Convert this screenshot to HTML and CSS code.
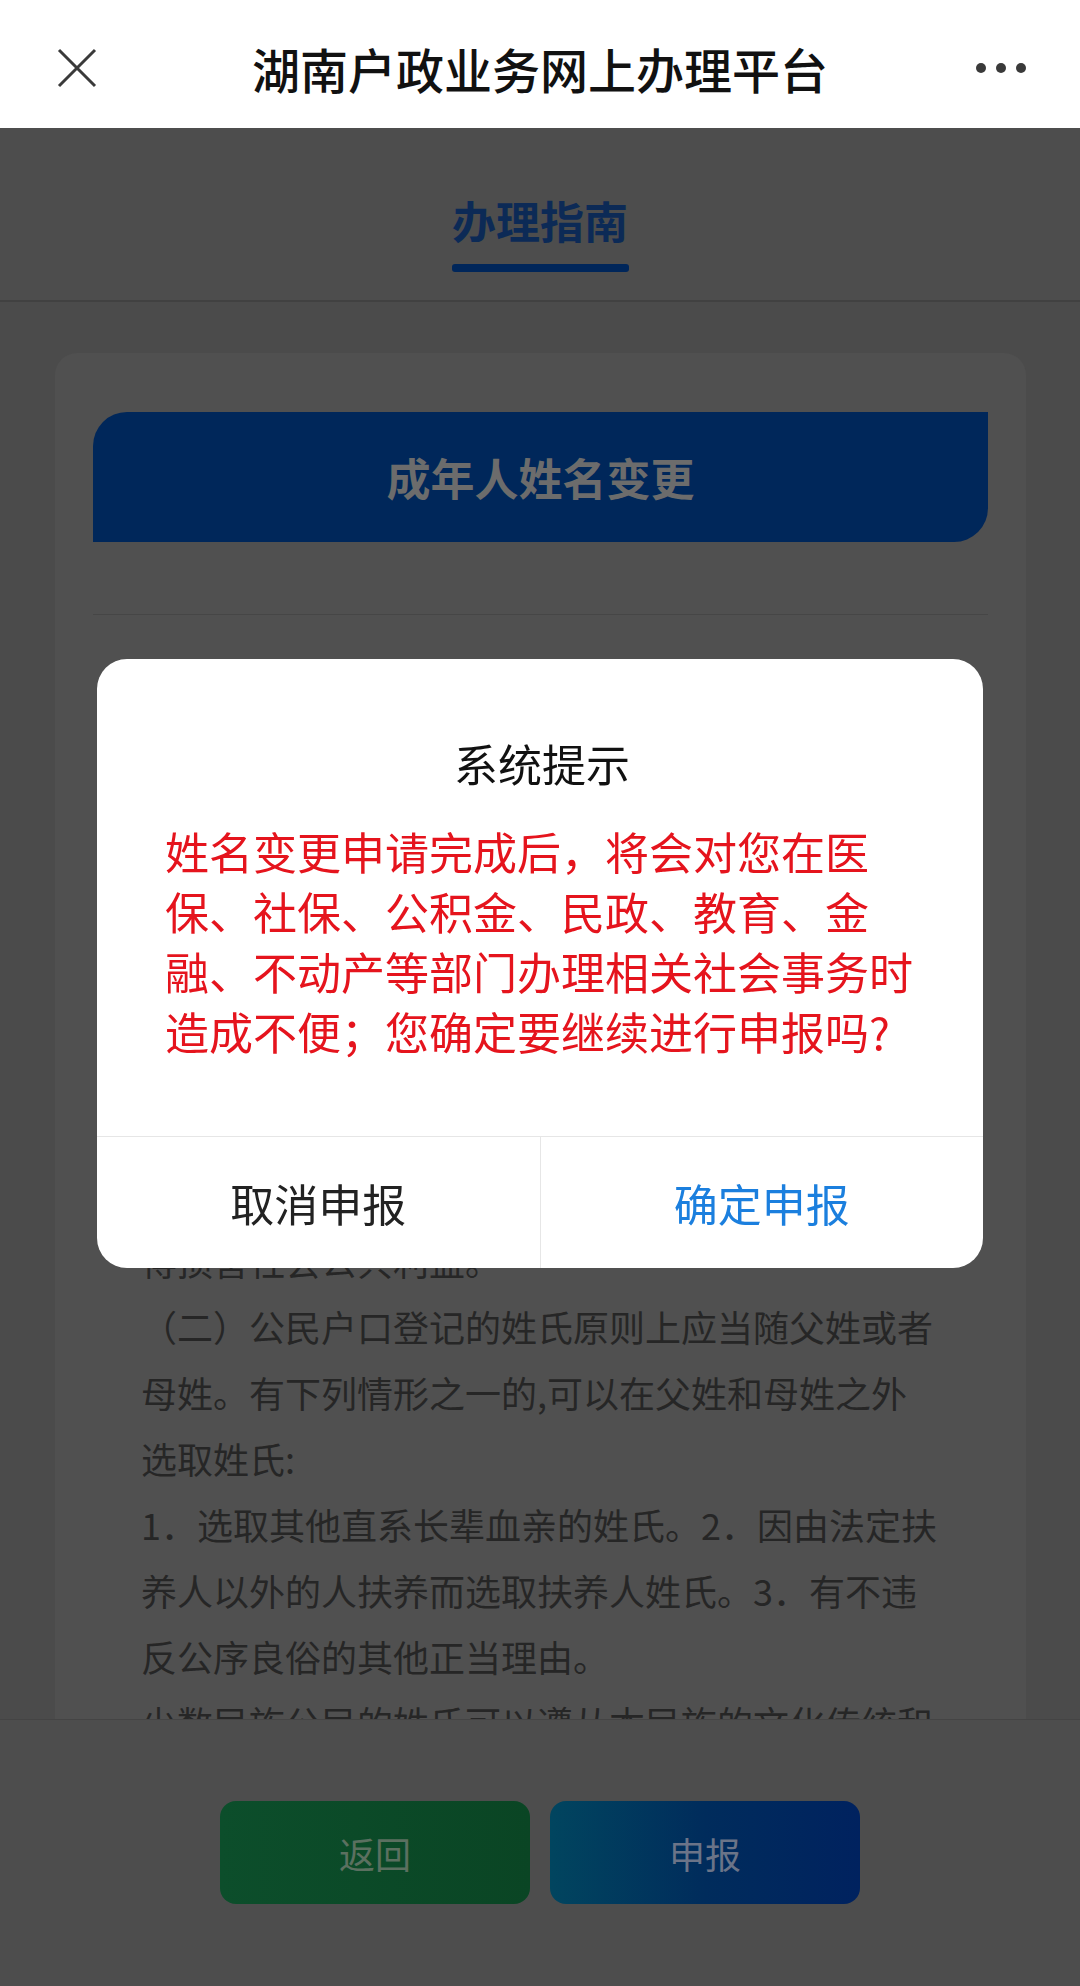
FILE: index.html
```html
<!DOCTYPE html>
<html lang="zh-CN">
<head>
  <meta charset="UTF-8">
  <meta name="viewport" content="width=device-width, initial-scale=1.0">
  <title>湖南户政业务网上办理平台</title>
  <link rel="stylesheet" href="styles.css">
</head>
<body>
  <header class="nav">
    <div class="nav-left">
      <svg class="icon-close" width="40" height="40" viewBox="0 0 40 40">
        <path d="M2 2 L38 38 M38 2 L2 38" stroke="#3a3a3a" stroke-width="3" fill="none"/>
      </svg>
    </div>
    <div class="nav-title">湖南户政业务网上办理平台</div>
    <div class="nav-right">
      <svg class="icon-more" width="50" height="12" viewBox="0 0 50 12">
        <circle cx="5" cy="6" r="5" fill="#3a3a3a"/>
        <circle cx="25" cy="6" r="5" fill="#3a3a3a"/>
        <circle cx="45" cy="6" r="5" fill="#3a3a3a"/>
      </svg>
    </div>
  </header>

  <div class="tabs">
    <div class="tab active">
      <span class="tab-text">办理指南</span>
      <span class="tab-bar"></span>
    </div>
  </div>

  <main class="main">
    <div class="card">
      <div class="banner">成年人姓名变更</div>
      <div class="divider"></div>
      <div class="guide">
        <p>一、姓名变更的相关规定</p>
        <p>《中华人民共和国民法典》第一千零一十二条、第一千零一十五条；《中华人民共和国户口登记条例》第十八条。</p>
        <p>（一）公民依法享有姓名权。公民行使姓名权属于民事活动，既应当依照民法通则第九十九条第一款和婚姻法第二十二条的规定，还应当遵守民法通则第七条的相关规定，即公民应当尊重社会公德，不得损害社会公共利益。</p>
        <p>（二）公民户口登记的姓氏原则上应当随父姓或者母姓。有下列情形之一的,可以在父姓和母姓之外选取姓氏:</p>
        <p>1．选取其他直系长辈血亲的姓氏。2．因由法定扶养人以外的人扶养而选取扶养人姓氏。3．有不违反公序良俗的其他正当理由。</p>
        <p>少数民族公民的姓氏可以遵从本民族的文化传统和风俗习惯。</p>
      </div>
    </div>
  </main>

  <footer class="footer">
    <button class="btn btn-back">返回</button>
    <button class="btn btn-submit">申报</button>
  </footer>

  <div class="mask">
    <div class="dialog">
      <div class="dialog-body">
        <div class="dialog-title">系统提示</div>
        <div class="dialog-msg">姓名变更申请完成后，将会对您在医保、社保、公积金、民政、教育、金融、不动产等部门办理相关社会事务时造成不便；您确定要继续进行申报吗?</div>
      </div>
      <div class="dialog-footer">
        <button class="dialog-btn cancel">取消申报</button>
        <button class="dialog-btn confirm">确定申报</button>
      </div>
    </div>
  </div>
</body>
</html>
```

FILE: styles.css
```css
/* page under the modal is drawn in its dimmed colours */
body {
  margin: 0;
  width: 1080px;
  height: 1986px;
  display: flex;
  flex-direction: column;
  overflow: hidden;
  font-family: "Noto Sans CJK SC", "Noto Sans", sans-serif;
  background-color: #4b4b4b;
}

.nav {
  height: 120px;
  padding-top: 8px;
  display: grid;
  grid-template-columns: 200px 1fr 200px;
  align-items: center;
  background-color: #fff;
  flex-shrink: 0;
}

.nav-left {
  padding-left: 57px;
  display: flex;
}

.nav-right {
  padding-right: 54px;
  display: flex;
  justify-content: flex-end;
}

.nav-title {
  text-align: center;
  font-size: 48px;
  font-weight: 500;
  color: #111;
  line-height: 60px;
}

.tabs {
  height: 172px;
  display: flex;
  justify-content: center;
  border-bottom: 2px solid #414141;
  background-color: #4d4d4d;
  flex-shrink: 0;
}

.tab {
  display: flex;
  flex-direction: column;
  align-items: center;
  padding-top: 62px;
}

.tab-text {
  font-size: 44px;
  font-weight: bold;
  line-height: 60px;
  color: #0c2a56;
}

.tab-bar {
  width: 177px;
  height: 8px;
  margin-top: 14px;
  border-radius: 3px;
  background-color: #00265a;
}

.main {
  flex: 1;
  overflow: hidden;
  padding: 51px 54px 0 55px;
}

.card {
  background-color: #505050;
  border-radius: 22px;
  padding: 59px 38px 0 38px;
  height: 100%;
}

.banner {
  height: 130px;
  display: flex;
  align-items: center;
  justify-content: center;
  background-color: #00275a;
  border-radius: 34px 0 34px 0;
  font-size: 44px;
  font-weight: bold;
  color: #6c6c6c;
}

.divider {
  height: 1px;
  margin-top: 72px;
  background-color: #464646;
}

.guide {
  padding: 84px 47px 0 48px;
  font-size: 36px;
  line-height: 66px;
  color: #262626;
}

.guide p {
  margin: 0;
}

.footer {
  height: 185px;
  padding-top: 81px;
  border-top: 1px solid #444;
  display: flex;
  justify-content: center;
  gap: 20px;
  background-color: #4d4d4d;
  flex-shrink: 0;
}

.btn {
  width: 310px;
  height: 103px;
  border: none;
  border-radius: 16px;
  font-family: inherit;
  font-size: 36px;
}

.btn-back {
  background: linear-gradient(90deg, #0c4e2b, #0a4524);
  color: #5b7060;
}

.btn-submit {
  background: linear-gradient(90deg, #01455f 0%, #002c5c 50%, #00225f 100%);
  color: #6b7488;
}

/* modal */
.mask {
  position: fixed;
  top: 0;
  left: 0;
  right: 0;
  bottom: 0;
  display: flex;
  justify-content: center;
  align-items: flex-start;
  padding-top: 659px;
}

.dialog {
  width: 886px;
  background-color: #fff;
  border-radius: 30px;
  overflow: hidden;
}

.dialog-body {
  padding: 74px 64px 75px 68px;
}

.dialog-title {
  text-align: center;
  font-size: 44px;
  line-height: 60px;
  color: #111;
}

.dialog-msg {
  margin-top: 28px;
  font-size: 44px;
  line-height: 60px;
  color: #e5141d;
}

.dialog-footer {
  display: flex;
  border-top: 1px solid #e6e6e6;
}

.dialog-btn {
  flex: 1;
  height: 131px;
  border: none;
  background: none;
  font-family: inherit;
  font-size: 44px;
}

.dialog-btn.cancel {
  color: #222;
  border-right: 1px solid #e6e6e6;
}

.dialog-btn.confirm {
  color: #1b7fde;
}
```
